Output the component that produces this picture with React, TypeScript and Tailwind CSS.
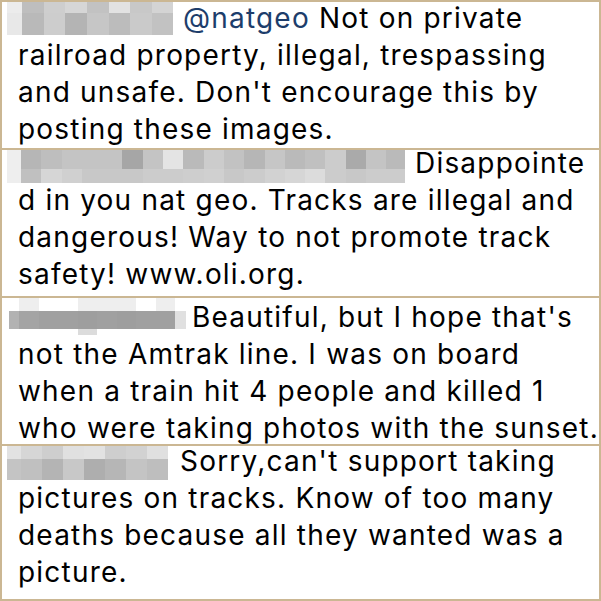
const shade = (n: number) => `rgb(${n},${n},${n})`;

type Row = { h: number; cells: number[] };
type Blur = { first: number; cw: number; w: number; rows: Row[] };

// pixelated user names, cell shades read off the screenshot
const blurs: Blur[] = [
  {
    first: 15,
    cw: 21.7,
    w: 166,
    rows: [
      { h: 11, cells: [236, 190, 206, 214, 194, 226, 200, 212] },
      { h: 22, cells: [232, 185, 205, 180, 198, 188, 202, 194] },
    ],
  },
  {
    first: 14,
    cw: 20.3,
    w: 398,
    rows: [
      { h: 19, cells: [238, 182, 190, 196, 196, 196, 166, 196, 228, 186, 204, 194, 182, 198, 186, 192, 204, 170, 196, 186] },
      { h: 14, cells: [238, 192, 214, 208, 200, 200, 200, 204, 204, 206, 208, 200, 204, 210, 214, 220, 204, 200, 204, 204] },
    ],
  },
  {
    first: 10,
    cw: 19.5,
    w: 177,
    rows: [
      { h: 13, cells: [255, 238, 255, 255, 238, 238, 238, 255, 238, 255] },
      { h: 18, cells: [178, 164, 160, 160, 158, 160, 158, 160, 160, 224] },
      { h: 6, cells: [255, 255, 255, 255, 220, 255, 255, 255, 255, 255] },
    ],
  },
  {
    first: 14,
    cw: 21,
    w: 162,
    rows: [
      { h: 13, cells: [226, 214, 206, 224, 226, 206, 210, 224] },
      { h: 21, cells: [196, 192, 180, 200, 174, 182, 196, 190] },
    ],
  },
];

const BlurName = ({ b }: { b: Blur }) => (
  <span className="flex shrink-0 flex-col overflow-hidden" style={{ width: b.w }}>
    {b.rows.map((r, i) => (
      <span key={i} className="flex" style={{ height: r.h }}>
        {r.cells.map((c, j) => (
          <span
            key={j}
            className="shrink-0"
            style={{ width: j === 0 ? b.first : b.cw, backgroundColor: shade(c) }}
          />
        ))}
      </span>
    ))}
  </span>
);

const comments = [
  {
    blur: 0,
    blurCls: "ml-[5px] mr-[10px]",
    textCls: "-mt-[2px]",
    first: (
      <>
        <span className="text-[#1d3d6b]">@natgeo</span> Not on private
      </>
    ),
    lines: [
      "railroad property, illegal, trespassing",
      "and unsafe. Don't encourage this by",
      "posting these images.",
    ],
  },
  {
    blur: 1,
    blurCls: "ml-[5px] mr-[10px]",
    textCls: "-mt-[5px]",
    first: <>Disappointe</>,
    lines: [
      "d in you nat geo. Tracks are illegal and",
      "dangerous! Way to not promote track",
      "safety! www.oli.org.",
    ],
  },
  {
    blur: 2,
    blurCls: "ml-[7px] mr-[6px]",
    textCls: "mt-[1px]",
    first: <>Beautiful, but I hope that's</>,
    lines: [
      "not the Amtrak line. I was on board",
      "when a train hit 4 people and killed 1",
      "who were taking photos with the sunset.",
    ],
  },
  {
    blur: 3,
    blurCls: "ml-[5px] mr-[11px]",
    textCls: "-mt-[3px]",
    first: <>Sorry,can't support taking</>,
    lines: [
      "pictures on tracks. Know of too many",
      "deaths because all they wanted was a",
      "picture.",
    ],
  },
];

export default function App() {
  return (
    <div className="h-[601px] w-[601px] overflow-hidden bg-white font-['Inter',sans-serif] text-black">
      <div className="flex h-[601px] flex-col border-2 border-[#cbb793]">
        {comments.map((c, i) => (
          <div
            key={i}
            className={`h-[148px] shrink-0 text-[28px] leading-[37px] tracking-[1.2px] ${
              i < 3 ? "border-b-2 border-[#cbb793]" : ""
            }`}
          >
            <div className="flex items-start whitespace-nowrap">
              <div className={`h-0 ${c.blurCls}`}>
                <BlurName b={blurs[c.blur]} />
              </div>
              <div className={c.textCls}>{c.first}</div>
            </div>
            <div className="pl-[16px]">
              {c.lines.map((l, k) => (
                <div key={k} className="whitespace-nowrap">
                  {l}
                </div>
              ))}
            </div>
          </div>
        ))}
      </div>
    </div>
  );
}
